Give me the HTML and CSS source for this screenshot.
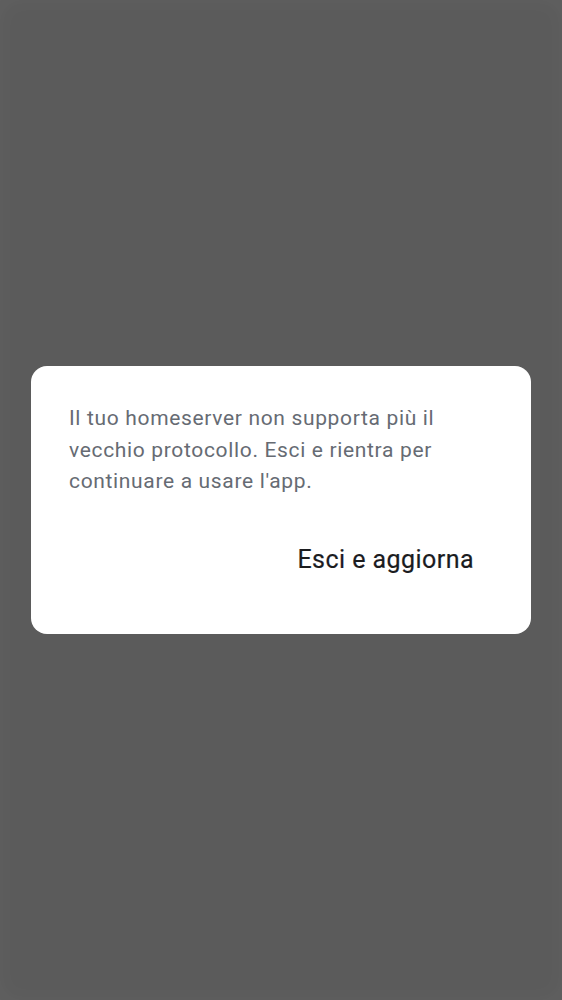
FILE: index.html
```html
<!DOCTYPE html>
<html lang="it">
<head>
<meta charset="utf-8">
<link rel="stylesheet" href="styles.css">
</head>
<body>
<div class="scrim">
  <div class="dialog">
    <p class="message">Il tuo homeserver non supporta più il vecchio protocollo. Esci e rientra per continuare a usare l'app.</p>
    <div class="actions">
      <button class="action">Esci e aggiorna</button>
    </div>
  </div>
</div>
</body>
</html>
```
FILE: styles.css
```css
html, body {
  margin: 0;
  padding: 0;
  height: 100%;
}
body {
  background: #5b5b5b;
  font-family: Roboto, "Noto Sans", sans-serif;
}
.scrim {
  height: 1000px;
  display: flex;
  align-items: center;
  justify-content: center;
  box-shadow: inset 0 0 24px rgba(255,255,255,0.04);
}
.dialog {
  width: 500px;
  height: 268px;
  box-sizing: border-box;
  background: #ffffff;
  border-radius: 16px;
  padding: 37px 38px 0 38px;
  display: flex;
  flex-direction: column;
}
.message {
  margin: 0;
  font-size: 21px;
  line-height: 31.5px;
  color: #666b73;
  letter-spacing: 0.66px;
}
.actions {
  display: flex;
  justify-content: flex-end;
  margin-top: 46px;
  padding-right: 19px;
}
.action {
  background: none;
  border: none;
  padding: 0;
  font-family: Roboto, "Noto Sans", sans-serif;
  font-size: 25px;
  font-weight: 400;
  line-height: 32px;
  color: #1b1c1f;
  letter-spacing: 0.45px;
  -webkit-text-stroke: 0.2px #1b1c1f;
}
```
